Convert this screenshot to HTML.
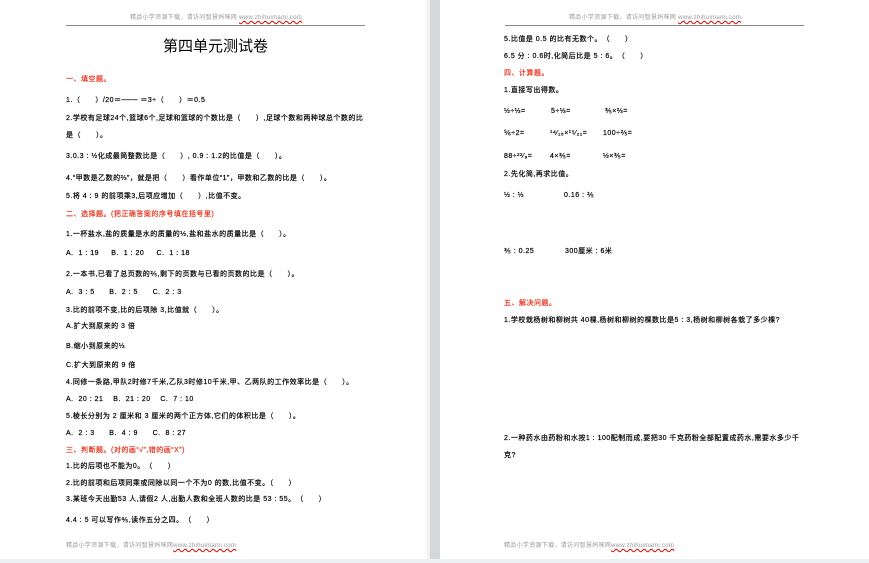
<!DOCTYPE html>
<html><head><meta charset="utf-8"><style>
body{margin:0;width:869px;height:563px;overflow:hidden;background:#eef0f3;font-family:"Liberation Sans","Noto Sans CJK SC",sans-serif;position:relative}
.pg{position:absolute;top:0;height:559px;background:#fff}
.t{position:absolute;font-size:7px;line-height:8px;color:#000;white-space:nowrap;transform:translateY(-4px);letter-spacing:0.5px;-webkit-text-stroke:0.2px #000}
.r{color:#e8321c;-webkit-text-stroke:0.2px #e8321c}
.h{color:#999;font-size:6px;-webkit-text-stroke:0;letter-spacing:0.3px}
.u{color:#999;font-size:6px;text-decoration:underline wavy #d00}
.ln{position:absolute;height:1px;background:#888;top:25px}
</style></head><body>
<div class="pg" style="left:0;width:430px;box-shadow:inset -8px 0 6px -6px #e6e6e6"></div>
<div style="position:absolute;left:430px;top:0;width:10px;height:559px;background:#d6d7da"></div>
<div class="pg" style="left:440px;width:429px"></div>

<div class="t h" style="left:130px;top:18px">精品小学资源下载，请访问智慧妈咪网 <span class="u">www.zhihuimami.com</span></div>
<div class="ln" style="left:66px;width:299px"></div>
<div class="t" style="left:163px;top:47px;font-size:15px;line-height:16px;transform:translateY(-8px);letter-spacing:0;-webkit-text-stroke:0">第四单元测试卷</div>
<div class="t r" style="left:66px;top:80px">一、填空题。</div>
<div class="t" style="left:66px;top:101px">1.（　　）/20＝─── ＝3÷（　　）＝0.5</div>
<div class="t" style="left:66px;top:119px">2.学校有足球24个,篮球6个,足球和篮球的个数比是（　　）,足球个数和两种球总个数的比</div>
<div class="t" style="left:66px;top:136px">是（　　）。</div>
<div class="t" style="left:66px;top:157px">3.0.3 : ½化成最简整数比是（　　）, 0.9 : 1.2的比值是（　　）。</div>
<div class="t" style="left:66px;top:179px">4.“甲数是乙数的⅔”，就是把（　　）看作单位“1”，甲数和乙数的比是（　　）。</div>
<div class="t" style="left:66px;top:197px">5.将 4 : 9 的前项乘3,后项应增加（　　）,比值不变。</div>
<div class="t r" style="left:66px;top:215px">二、选择题。(把正确答案的序号填在括号里)</div>
<div class="t" style="left:66px;top:235px">1.一杯盐水,盐的质量是水的质量的½,盐和盐水的质量比是（　　）。</div>
<div class="t" style="left:66px;top:254px">A.&nbsp; 1 : 19&nbsp;&nbsp;&nbsp;&nbsp; B.&nbsp; 1 : 20&nbsp;&nbsp;&nbsp;&nbsp; C.&nbsp; 1 : 18</div>
<div class="t" style="left:66px;top:275px">2.一本书,已看了总页数的⅖,剩下的页数与已看的页数的比是（　　）。</div>
<div class="t" style="left:66px;top:293px">A.&nbsp; 3 : 5&nbsp;&nbsp;&nbsp;&nbsp;&nbsp; B.&nbsp; 2 : 5&nbsp;&nbsp;&nbsp;&nbsp;&nbsp; C.&nbsp; 2 : 3</div>
<div class="t" style="left:66px;top:311px">3.比的前项不变,比的后项除 3,比值就（　　）。</div>
<div class="t" style="left:66px;top:327px">A.扩大到原来的 3 倍</div>
<div class="t" style="left:66px;top:347px">B.缩小到原来的⅓</div>
<div class="t" style="left:66px;top:366px">C.扩大到原来的 9 倍</div>
<div class="t" style="left:66px;top:383px">4.同修一条路,甲队2时修7千米,乙队3时修10千米,甲、乙两队的工作效率比是（　　）。</div>
<div class="t" style="left:66px;top:400px">A.&nbsp; 20 : 21&nbsp;&nbsp;&nbsp; B.&nbsp; 21 : 20&nbsp;&nbsp;&nbsp; C.&nbsp; 7 : 10</div>
<div class="t" style="left:66px;top:417px">5.棱长分别为 2 厘米和 3 厘米的两个正方体,它们的体积比是（　　）。</div>
<div class="t" style="left:66px;top:434px">A.&nbsp; 2 : 3&nbsp;&nbsp;&nbsp;&nbsp;&nbsp; B.&nbsp; 4 : 9&nbsp;&nbsp;&nbsp;&nbsp;&nbsp; C.&nbsp; 8 : 27</div>
<div class="t r" style="left:66px;top:451px">三、判断题。(对的画“√”,错的画“X”)</div>
<div class="t" style="left:66px;top:467px">1.比的后项也不能为0。　（　　）</div>
<div class="t" style="left:66px;top:484px">2.比的前项和后项同乘或同除以同一个不为0 的数,比值不变。（　　）</div>
<div class="t" style="left:66px;top:500px">3.某班今天出勤53 人,请假2 人,出勤人数和全班人数的比是 53 : 55。　（　　）</div>
<div class="t" style="left:66px;top:521px">4.4 : 5 可以写作⅘,读作五分之四。　（　　）</div>
<div class="t h" style="left:66px;top:546px">精品小学资源下载，请访问智慧妈咪网<span class="u">www.zhihuimami.com</span></div>

<div class="t h" style="left:569px;top:18px">精品小学资源下载，请访问智慧妈咪网 <span class="u">www.zhihuimami.com</span></div>
<div class="ln" style="left:505px;width:299px"></div>
<div class="t" style="left:504px;top:40px">5.比值是 0.5 的比有无数个。　（　　）</div>
<div class="t" style="left:504px;top:57px">6.5 分 : 0.6时,化简后比是 5 : 6。　（　　）</div>
<div class="t r" style="left:504px;top:74px">四、计算题。</div>
<div class="t" style="left:504px;top:91px">1.直接写出得数。</div>
<div class="t" style="left:504px;top:112px">½÷⅓=</div><div class="t" style="left:551px;top:112px">5÷⅓=</div><div class="t" style="left:605px;top:112px">⅗×⅔=</div>
<div class="t" style="left:504px;top:134px">⅚÷2=</div><div class="t" style="left:550px;top:134px">¹⁴⁄₁₅×¹⁵⁄₂₁=</div><div class="t" style="left:603px;top:134px">100÷⅖=</div>
<div class="t" style="left:504px;top:157px">88÷²²⁄₉=</div><div class="t" style="left:550px;top:157px">4×⅗=</div><div class="t" style="left:603px;top:157px">½×⅗=</div>
<div class="t" style="left:504px;top:175px">2.先化简,再求比值。</div>
<div class="t" style="left:504px;top:196px">½ : ⅓</div><div class="t" style="left:564px;top:196px">0.16 : ⅖</div>
<div class="t" style="left:504px;top:252px">⅗ : 0.25</div><div class="t" style="left:565px;top:252px">300厘米 : 6米</div>
<div class="t r" style="left:504px;top:304px">五、解决问题。</div>
<div class="t" style="left:504px;top:321px">1.学校栽杨树和柳树共 40棵,杨树和柳树的棵数比是5 : 3,杨树和柳树各栽了多少棵?</div>
<div class="t" style="left:504px;top:439px">2.一种药水由药粉和水按1 : 100配制而成,要把30 千克药粉全部配置成药水,需要水多少千</div>
<div class="t" style="left:504px;top:456px">克?</div>
<div class="t h" style="left:504px;top:546px">精品小学资源下载，请访问智慧妈咪网<span class="u">www.zhihuimami.com</span></div>
</body></html>
